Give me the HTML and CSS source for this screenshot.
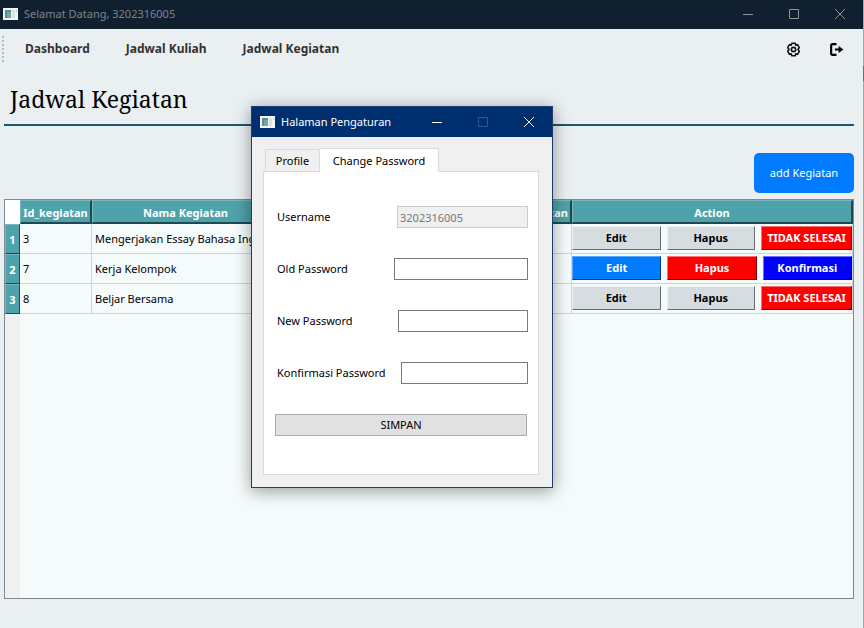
FILE: index.html
```html
<!DOCTYPE html>
<html lang="id">
<head>
<meta charset="utf-8">
<title>Selamat Datang, 3202316005</title>
<link rel="stylesheet" href="styles.css">
</head>
<body>
<div class="window">
  <header class="titlebar">
    <svg class="app-icon" viewBox="0 0 15 12"><path fill="#f4f6f6" d="M0 0h15v12H0z"/><path fill="#5b87a0" d="M2 2h6v8H2z"/><path fill="#6fae92" d="M4 4h4v6H4z"/><path fill="#d9e2df" d="M9 2h3v8H9z"/><path fill="#b9c6c4" d="M13 2h1v2h-1z"/></svg>
    <span class="titlebar-text">Selamat Datang, 3202316005</span>
    <div class="window-controls">
      <button aria-label="Minimize"><svg viewBox="0 0 12 12"><path d="M1 6.5h10"/></svg></button>
      <button aria-label="Maximize"><svg viewBox="0 0 12 12"><path d="M1.500 1.500h9v9h-9z"/></svg></button>
      <button aria-label="Close"><svg viewBox="0 0 12 12"><path d="M1 1l10 10M11 1L1 11"/></svg></button>
    </div>
  </header>
  <nav class="toolbar">
    <span class="grip"></span>
    <a href="#dashboard">Dashboard</a>
    <a href="#kuliah">Jadwal Kuliah</a>
    <a href="#kegiatan">Jadwal Kegiatan</a>
    <div class="tools">
      <button aria-label="Pengaturan"><svg viewBox="0 0 14 14" fill="none" stroke="#111" stroke-width="1.500" stroke-linejoin="round"><path d="M5.400 1.200h3.200l.5 1.700 1.700-.4 1.600 2.700L11.200 7l1.200 1.800-1.600 2.700-1.700-.4-.5 1.700H5.400l-.5-1.700-1.700.4-1.600-2.700L2.800 7 1.600 5.200l1.600-2.700 1.700.4z"/><circle cx="7" cy="7" r="2"/></svg></button>
      <button aria-label="Keluar"><svg viewBox="0 0 14 14" fill="none" stroke="#000" stroke-width="2"><path d="M7 2H3.500Q2 2 2 3.500v7Q2 12 3.500 12H7M5.500 7H10"/><path d="M9 3.800L13.500 7 9 10.200z" fill="#000" stroke="none"/></svg></button>
    </div>
  </nav>
  <main class="content">
    <h1>Jadwal Kegiatan</h1>
    <button class="add">add Kegiatan</button>
    <div class="table-frame">
      <table>
        <colgroup><col class="c-num"><col class="c-id"><col><col class="c-type"><col class="c-action"></colgroup>
        <thead>
          <tr><td class="corner"></td><th>Id_kegiatan</th><th class="name-head">Nama Kegiatan</th><th class="type-head">Kegiatan</th><th>Action</th></tr>
        </thead>
        <tbody>
          <tr><th>1</th><td>3</td><td>Mengerjakan Essay Bahasa Inggris</td><td></td>
            <td class="actions"><div><button>Edit</button><button>Hapus</button><button class="red wide">TIDAK SELESAI</button></div></td></tr>
          <tr><th>2</th><td>7</td><td>Kerja Kelompok</td><td></td>
            <td class="actions"><div><button class="blue">Edit</button><button class="red">Hapus</button><button class="navy">Konfirmasi</button></div></td></tr>
          <tr><th>3</th><td>8</td><td>Beljar Bersama</td><td></td>
            <td class="actions"><div><button>Edit</button><button>Hapus</button><button class="red wide">TIDAK SELESAI</button></div></td></tr>
        </tbody>
      </table>
    </div>
  </main>
</div>

<section class="dialog" role="dialog" aria-labelledby="dialog-title">
  <header class="titlebar dialog-bar">
    <svg class="app-icon" viewBox="0 0 15 12"><path fill="#f4f6f6" d="M0 0h15v12H0z"/><path fill="#5b87a0" d="M2 2h6v8H2z"/><path fill="#6fae92" d="M4 4h4v6H4z"/><path fill="#d9e2df" d="M9 2h3v8H9z"/><path fill="#b9c6c4" d="M13 2h1v2h-1z"/></svg>
    <span class="titlebar-text" id="dialog-title">Halaman Pengaturan</span>
    <div class="window-controls">
      <button aria-label="Minimize"><svg viewBox="0 0 12 12"><path d="M1 6.5h10"/></svg></button>
      <button aria-label="Maximize" disabled><svg viewBox="0 0 12 12"><path d="M1.500 1.500h9v9h-9z"/></svg></button>
      <button aria-label="Close"><svg viewBox="0 0 12 12"><path d="M1 1l10 10M11 1L1 11"/></svg></button>
    </div>
  </header>
  <div class="dialog-body">
    <div class="tabs" role="tablist">
      <button role="tab">Profile</button>
      <button role="tab" class="active" aria-selected="true">Change Password</button>
    </div>
    <form class="panel">
      <div class="field"><label for="username">Username</label><input id="username" class="w-user" value="3202316005" disabled></div>
      <div class="field"><label for="old">Old Password</label><input id="old" class="w-old" type="password"></div>
      <div class="field"><label for="new">New Password</label><input id="new" class="w-new" type="password"></div>
      <div class="field"><label for="confirm">Konfirmasi Password</label><input id="confirm" class="w-confirm" type="password"></div>
      <button class="save" type="button">SIMPAN</button>
    </form>
  </div>
</section>
</body>
</html>
```
FILE: styles.css
```css
* { box-sizing: border-box; }
body {
  margin: 0;
  background: #eaeff2;
  color: #000;
  font: 11px/16px "Noto Sans", "Open Sans", sans-serif;
}
button, input { font: inherit; color: inherit; margin: 0; }
button { padding: 0; }
a { color: inherit; text-decoration: none; }

.window {
  min-height: 100vh;
  display: flex;
  flex-direction: column;
  padding-right: 1px;
  background: linear-gradient(#a3a6a8 66px, #2f8573 66px, #2f8573 81px, #a3a6a8 81px) right / 1px 100% no-repeat;
}

.titlebar {
  display: flex;
  align-items: center;
  height: 29px;
  padding: 0 0 2px 3px;
  background: #11202f;
  color: #7b858e;
}
.app-icon { width: 15px; height: 12px; margin-right: 6px; flex: none; }
.titlebar-text { white-space: nowrap; }
.window-controls { display: flex; margin-left: auto; }
.window-controls button {
  display: grid;
  place-items: center;
  width: 46px;
  height: 26px;
  border: 0;
  background: none;
}
.window-controls svg { width: 12px; height: 12px; fill: none; stroke: #8b949b; }

.toolbar {
  display: flex;
  align-items: center;
  gap: 36px;
  height: 40px;
  padding-right: 19px;
  color: #333;
  font-size: 12px;
  line-height: 18px;
  font-weight: bold;
}
.grip {
  width: 2px;
  height: 26px;
  margin-left: 2px;
  margin-right: -15px;
  background: repeating-linear-gradient(#b5babd 0 2px, transparent 2px 4px);
}
.tools { display: flex; gap: 28px; margin-left: auto; }
.tools button { border: 0; background: none; height: 18px; }
.tools svg { width: 15px; height: 15px; display: block; }

.content {
  flex: 1;
  display: flex;
  flex-direction: column;
  padding: 0 9px 29px 4px;
}
h1 {
  margin: 0 0 27px;
  padding: 13px 6px 8px;
  border-bottom: 2px solid #1b5872;
  font: 23px/34px "Noto Serif", "Droid Serif", "Liberation Serif", serif;
}
.add {
  align-self: flex-end;
  width: 100px;
  height: 40px;
  margin-bottom: 6px;
  border: 0;
  border-radius: 5px;
  background: #007bff;
  color: #fff;
}

.table-frame {
  flex: 1;
  border: 1px solid #828790;
  background: linear-gradient(90deg, #f0f0f0 15px, #f5fbfb 15px);
}
table { width: 100%; table-layout: fixed; border-collapse: separate; border-spacing: 0; }
.c-num { width: 15px; }
.c-id { width: 72px; }
.c-type { width: 86px; }
.c-action { width: 281px; }
th {
  padding: 2px 0 0;
  height: 24px;
  border: 1px solid;
  border-color: #79b5bb #1c4a50 #1c4a50 #79b5bb;
  background: #4ea2a9;
  color: #fff;
  white-space: nowrap;
}
thead th { border-right-width: 2px; border-bottom-width: 2px; }
.name-head { padding-right: 206px; }
.type-head { text-align: right; padding-right: 2px; }
.corner { height: 24px; padding: 0; border: 0; background: #fff; }
td {
  height: 30px;
  padding: 0 3px;
  border-right: 1px solid #ced4d6;
  border-bottom: 1px solid #ced4d6;
  overflow: hidden;
  white-space: nowrap;
  background: #f5fbfb;
}
td.actions { padding: 2px 0 0; vertical-align: top; }
.actions div { display: flex; gap: 6px; }
.actions button {
  flex: 1;
  height: 24px;
  border: 1px solid;
  border-color: #f0f2f3 #686c6e #686c6e #f0f2f3;
  background: #d6dde0;
  font-weight: bold;
}
.actions .wide { flex: 0 0 91px; }
.actions .red { background: #f00; color: #fff; border-color: #ff7070 #800000 #800000 #ff7070; }
.actions .blue { background: #007bff; color: #fff; border-color: #59a9ff #003f83 #003f83 #59a9ff; }
.actions .navy { background: #00f; color: #fff; border-color: #7070ff #000080 #000080 #7070ff; }

.dialog {
  position: absolute;
  left: 251px;
  top: 106px;
  width: 302px;
  border: 1px solid #1f3d6f;
  background: #f0f0f0;
  box-shadow: 0 3px 16px rgba(0, 0, 0, .4);
}
.dialog-bar { height: 30px; padding: 0 0 0 8px; background: #002f70; color: #fff; }
.dialog-bar .window-controls svg { stroke: #fff; }
.dialog-bar .window-controls button:disabled svg { stroke: #315a91; }
.dialog-body { padding: 11px 13px 12px 11px; }
.tabs { display: flex; align-items: flex-end; padding-left: 2px; }
.tabs button {
  width: 55px;
  height: 22px;
  border: 1px solid #d9d9d9;
  border-bottom: 0;
  background: #f0f0f0;
}
.tabs .active { width: 119px; height: 24px; margin-bottom: -1px; background: #fff; border-left: 0; position: relative; }
.panel {
  padding: 34px 10px 38px 13px;
  border: 1px solid #d9d9d9;
  background: #fff;
}
.field { display: flex; align-items: center; justify-content: space-between; margin-bottom: 30px; }
.field label { line-height: 18px; }
.field input { height: 22px; padding: 0 2px; border: 1px solid #7a7a7a; background: #fff; border-radius: 0; }
.field input:disabled { border-color: #ccc; background: #f0f0f0; color: #777; }
.field .w-user { width: 131px; }
.field .w-old { width: 134px; }
.field .w-new { width: 130px; }
.field .w-confirm { width: 127px; }
.save {
  display: block;
  width: 252px;
  height: 22px;
  margin-left: -2px;
  border: 1px solid #adadad;
  background: #e1e1e1;
}
```
